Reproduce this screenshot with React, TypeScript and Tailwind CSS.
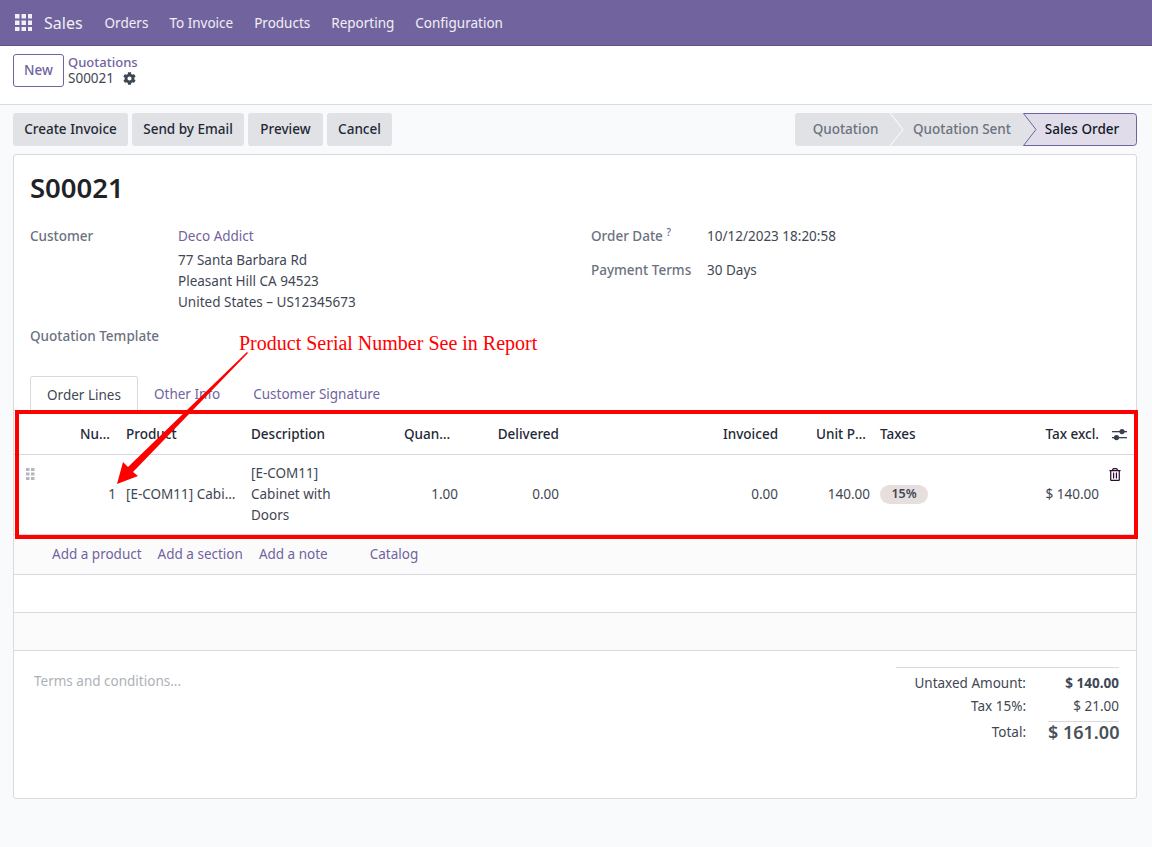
import { FaCog, FaRegTrashAlt } from "react-icons/fa";

const ROW = "grid grid-cols-[58px_46px_125px_153px_70px_101px_219px_86px_235px_29px]";

const ACTIONS = [
  { label: "Create Invoice", width: "w-[115px]" },
  { label: "Send by Email", width: "w-[112px]" },
  { label: "Preview", width: "w-[75px]" },
  { label: "Cancel", width: "w-[65px]" },
];

function AppsIcon() {
  const cells = [0, 6.5, 13];
  return (
    <svg width="17" height="17" viewBox="0 0 17 17" className="fill-white/90">
      {cells.map((y) =>
        cells.map((x) => <rect key={`${x}-${y}`} x={x} y={y} width="4.5" height="4.5" />)
      )}
    </svg>
  );
}

function GripIcon() {
  return (
    <svg width="9" height="12" viewBox="0 0 9 12" className="fill-[#b4b8bd]">
      {[0, 4.5, 9].map((y) =>
        [0, 5].map((x) => <rect key={`${x}-${y}`} x={x} y={y} width="3.5" height="3" />)
      )}
    </svg>
  );
}

function AdjustIcon() {
  return (
    <svg width="15" height="13" viewBox="0 0 15 13" className="fill-[#374151]">
      <rect x="0" y="3" width="15" height="1.3" />
      <rect x="0" y="9" width="15" height="1.3" />
      <circle cx="10" cy="3.6" r="2.6" />
      <circle cx="4.5" cy="9.6" r="2.6" />
    </svg>
  );
}

function Field({ label, children, className = "" }: { label: React.ReactNode; children: React.ReactNode; className?: string }) {
  return (
    <div className={`flex ${className}`}>
      <div className="font-medium text-[#6b7280]">{label}</div>
      {children}
    </div>
  );
}

function Annotation() {
  return (
    <>
      <div className="pointer-events-none absolute left-[15px] top-[410px] h-[129px] w-[1123px] border-4 border-[#ff0000]" />
      <div className="absolute left-[239px] top-[331px] font-['Liberation_Serif',serif] text-[20px] leading-[24px] text-[#ff0000]">
        Product Serial Number See in Report
      </div>
      <svg className="pointer-events-none absolute left-0 top-0" width="300" height="500" viewBox="0 0 300 500">
        <polygon points="247,352 248,353 133,472 138,476 117,484 123,462 128,467" fill="#ff0000" />
      </svg>
    </>
  );
}

export default function App() {
  return (
    <div className="relative flex h-[847px] w-[1152px] flex-col overflow-hidden bg-[#f9fafb] font-['Noto_Sans',sans-serif] text-[13.5px] text-[#3f4754]">
      <nav className="flex h-[46px] shrink-0 items-center border-b border-[#5f5289] bg-[#71639e] pl-[15px] text-white/90">
        <AppsIcon />
        <span className="ml-[12px] text-[16px]">Sales</span>
        <div className="ml-[22px] flex gap-[21px] pt-[1px]">
          <span>Orders</span>
          <span>To Invoice</span>
          <span>Products</span>
          <span>Reporting</span>
          <span>Configuration</span>
        </div>
      </nav>

      <div className="flex h-[59px] shrink-0 items-start gap-[4px] border-b border-[#d8dadd] bg-white pl-[13px] pt-[8px]">
        <button className="h-[33px] w-[51px] rounded-[3px] border border-[#71639e] pb-[1px] font-medium text-[#71639e]">New</button>
        <div className="leading-[16px]">
          <div className="text-[13px] font-medium leading-[16px] text-[#71639e]">Quotations</div>
          <div className="flex items-center gap-[9px] text-[#3f4754]">
            S00021
            <FaCog className="h-[13px] w-[13px]" />
          </div>
        </div>
      </div>

      <div className="flex items-center justify-between py-[8px] pl-[13px] pr-[15px]">
        <div className="flex gap-[4px]">
          {ACTIONS.map((b) => (
            <button key={b.label} className={`${b.width} h-[33px] rounded-[3px] bg-[#e0e2e6] pb-[1px] font-medium text-[#1f2937]`}>
              {b.label}
            </button>
          ))}
        </div>
        <div className="flex h-[33px] w-[342px] overflow-hidden rounded-[3px] bg-[#e0e2e6] font-medium text-[#6b7280]">
          <div className="relative flex w-[95px] items-center justify-center pb-[1px] pl-[6px]">
            Quotation
            <svg className="absolute right-[-14px] top-0 z-10" width="15" height="33" viewBox="0 0 15 33" fill="none">
              <path d="M1 0 L14 16.5 L1 33" stroke="#ffffff" strokeWidth="1" />
            </svg>
          </div>
          <div className="flex w-[133px] items-center justify-center pb-[1px] pl-[11px]">Quotation Sent</div>
          <div className="relative flex w-[114px] items-center justify-center pb-[1px] pl-[4px] text-[#111827]">
            <svg className="absolute inset-0" width="114" height="33" viewBox="0 0 114 33">
              <path
                d="M.5 .5 H110.5 Q113.5 .5 113.5 3.5 V29.5 Q113.5 32.5 110.5 32.5 H.5 L13 16.5 Z"
                fill="#e1dcea"
                stroke="#71639e"
              />
            </svg>
            <span className="relative">Sales Order</span>
          </div>
        </div>
      </div>

      <main className="ml-[13px] flex h-[645px] w-[1124px] flex-col rounded-[3px] border border-[#d8dadd] bg-white">
        <div className="px-[16px] pt-[15px]">
          <h1 className="text-[27.5px] font-semibold leading-[36px] text-[#1f2327]">S00021</h1>
          <div className="mt-[20px] flex">
            <div className="w-[561px]">
              <Field label={<span className="block w-[148px]">Customer</span>}>
                <div className="leading-[21px]">
                  <div className="text-[#71639e]">Deco Addict</div>
                  <div className="mt-[3px]">77 Santa Barbara Rd</div>
                  <div>Pleasant Hill CA 94523</div>
                  <div>United States – US12345673</div>
                </div>
              </Field>
              <Field className="mt-[13px] leading-[21px]" label="Quotation Template">
                <span />
              </Field>
            </div>
            <div className="leading-[21px]">
              <Field label={<span className="block w-[116px]">Order Date <sup className="text-[10px] text-[#71639e]">?</sup></span>}>
                <span>10/12/2023 18:20:58</span>
              </Field>
              <Field className="mt-[13px]" label={<span className="block w-[116px]">Payment Terms</span>}>
                <span>30 Days</span>
              </Field>
            </div>
          </div>
        </div>

        <div className="mt-[29px] flex h-[35px] items-end border-b border-[#d8dadd] pl-[16px]">
          <div className="-mb-px flex h-[35px] w-[108px] items-center justify-center rounded-t-[3px] border border-[#d8dadd] border-b-white bg-white pt-[4px]">Order Lines</div>
          <div className="flex h-[35px] items-center px-[16px] pt-[4px] text-[#71639e]">Other Info</div>
          <div className="flex h-[35px] items-center px-[17px] pt-[4px] text-[#71639e]">Customer Signature</div>
        </div>

        <div className={`${ROW} h-[44px] items-center border-b border-[#d8dadd] pt-[3px] font-medium text-[#1f2937]`}>
          <span />
          <span className="truncate pl-2">Number</span>
          <span className="px-2">Product</span>
          <span className="px-2">Description</span>
          <span className="truncate pl-2 pr-[14px] text-right">Quantity</span>
          <span className="px-2 text-right">Delivered</span>
          <span className="px-2 text-right">Invoiced</span>
          <span className="truncate pl-[30px] pr-[2px]">Unit Price</span>
          <span className="flex justify-between px-2">
            <span>Taxes</span>
            <span>Tax excl.</span>
          </span>
          <span className="flex pl-[5px]"><AdjustIcon /></span>
        </div>

        <div className={`${ROW} h-[80px] items-center border-b border-[#d8dadd]`}>
          <span className="-mt-[42px] pl-[12px]"><GripIcon /></span>
          <span className="pr-[2px] text-right">1</span>
          <span className="truncate pl-2 pr-[4px]">[E-COM11] Cabinet with Doors</span>
          <span className="w-[130px] px-2 leading-[21px]">[E-COM11] Cabinet with Doors</span>
          <span className="px-2 text-right">1.00</span>
          <span className="px-2 text-right">0.00</span>
          <span className="px-2 text-right">0.00</span>
          <span className="pr-[2px] text-right">140.00</span>
          <span className="flex items-center justify-between px-2">
            <span className="flex h-[19px] w-[48px] items-center justify-center rounded-full bg-[#e6dfdd] pb-[1px] text-[12.5px] font-semibold">15%</span>
            <span>$ 140.00</span>
          </span>
          <span className="-mt-[40px] flex pl-[2px]"><FaRegTrashAlt className="h-[13px] w-[12px] text-[#2b0a2e]" /></span>
        </div>

        <div className="flex h-[40px] shrink-0 items-center gap-[16px] border-b border-[#d8dadd] bg-[#fbfbfc] pl-[38px] text-[#71639e]">
          <span>Add a product</span>
          <span>Add a section</span>
          <span>Add a note</span>
          <span className="ml-[26px]">Catalog</span>
        </div>
        <div className="h-[38px] shrink-0 border-b border-[#d8dadd] bg-white" />
        <div className="h-[38px] shrink-0 border-b border-[#d8dadd] bg-[#fbfbfc]" />

        <div className="flex flex-1 justify-between pl-[20px] pr-[17px] pt-[16px]">
          <div className="pt-[4px] text-[#adb1b8]">Terms and conditions...</div>
          <div className="w-[223px] border-t border-[#d8dadd] pt-[5px]">
            <div className="flex justify-end leading-[21px]">
              <span>Untaxed Amount:</span>
              <b className="w-[93px] text-right font-bold">$ 140.00</b>
            </div>
            <div className="mt-[2px] flex justify-end leading-[21px]">
              <span>Tax 15%:</span>
              <span className="w-[93px] text-right">$ 21.00</span>
            </div>
            <div className="flex justify-end leading-[21px]">
              <span className="mt-[5px]">Total:</span>
              <span className="ml-[22px] mt-[4px] w-[71px] whitespace-nowrap border-t border-[#d8dadd] text-right text-[18px] font-semibold leading-[20px] text-[#495057]">$ 161.00</span>
            </div>
          </div>
        </div>
      </main>

      <Annotation />
    </div>
  );
}
